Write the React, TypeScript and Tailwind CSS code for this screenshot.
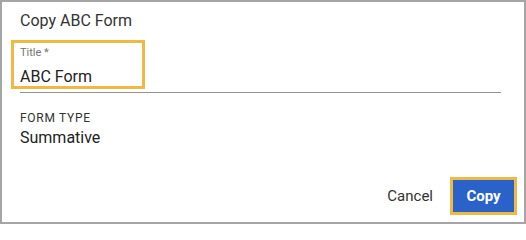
import React from "react";

// Dialog for copying a form, with the annotation highlights shown in the mock
export default function App() {
  return (
    <div
      className="relative w-[526px] h-[224px] border-2 border-[#a5a5a5] bg-white pt-[9px] pl-[18px] flex flex-col"
      style={{ fontFamily: "Roboto, 'Liberation Sans', sans-serif" }}
    >
      <h2 className="text-[16px] leading-[19px] text-[#333333] font-normal">
        Copy ABC Form
      </h2>

      <div className="relative mt-[16px] w-[481px] pb-[6px] border-b border-[#949494]">
        <span className="absolute -top-[6px] -left-[9px] w-[134px] h-[49px] border-[3px] border-[#f0b944]" />
        <label className="block text-[11px] leading-[13px] text-[#757575]">
          Title *
        </label>
        <div className="mt-[8px] text-[16px] leading-[19px] text-[#222222]">
          ABC Form
        </div>
      </div>

      <div className="mt-[18px] text-[12px] leading-[14px] tracking-[0.06em] text-[#333333] uppercase">
        Form Type
      </div>
      <div className="mt-[3px] text-[16px] leading-[19px] text-[#222222]">
        Summative
      </div>

      <div className="mt-[33px] flex items-center justify-end gap-[12px] pr-[10px]">
        <button className="px-[8px] h-[32px] text-[15px] leading-[18px] text-[#333333]">
          Cancel
        </button>
        <button className="w-[61px] h-[32px] bg-[#2a62c9] text-white text-[15px] leading-[18px] font-bold outline-[3px] outline-solid outline-[#f0b944]">
          Copy
        </button>
      </div>
    </div>
  );
}
